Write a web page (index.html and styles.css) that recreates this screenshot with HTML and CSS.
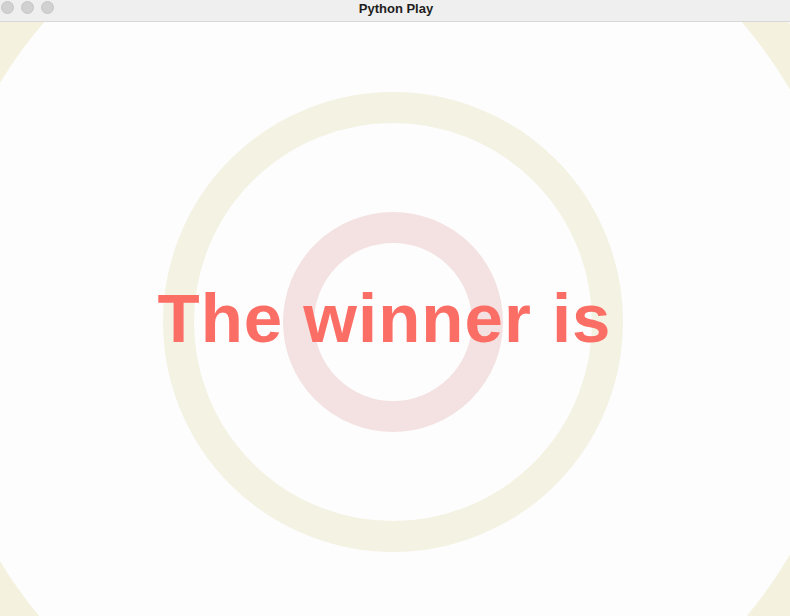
FILE: index.html
```html
<!DOCTYPE html>
<html>
<head>
<meta charset="utf-8">
<title>Python Play</title>
<link rel="stylesheet" href="styles.css">
</head>
<body>
<div class="window">
  <header class="titlebar">
    <div class="lights">
      <span class="light"></span>
      <span class="light"></span>
      <span class="light"></span>
    </div>
    <div class="title">Python Play</div>
  </header>
  <main class="stage">
    <svg class="rings" width="790" height="594" viewBox="0 0 790 594" aria-hidden="true">
      <circle cx="393" cy="300" r="478" fill="none" stroke="#f4f1df" stroke-width="36"/>
      <circle cx="393" cy="300" r="214.5" fill="none" stroke="#f4f2e3" stroke-width="31"/>
      <circle cx="393" cy="300" r="94.5" fill="none" stroke="#f4e2e2" stroke-width="31"/>
    </svg>
    <div class="message">The winner is</div>
  </main>
</div>
</body>
</html>
```

FILE: styles.css
```css
html, body {
  margin: 0;
  padding: 0;
  background: #fdfdfd;
}
.window {
  width: 790px;
  height: 616px;
  display: flex;
  flex-direction: column;
  overflow: hidden;
}
.titlebar {
  height: 21px;
  flex: 0 0 21px;
  background: #efefef;
  border-bottom: 1px solid #d8d8d8;
  display: grid;
  grid-template-columns: 1fr;
  align-items: center;
}
.lights {
  grid-area: 1 / 1;
  display: flex;
  gap: 7px;
  padding-left: 1px;
  align-self: start;
  padding-top: 1px;
}
.light {
  box-sizing: border-box;
  width: 13px;
  height: 13px;
  border-radius: 50%;
  background: #d1d1d1;
  border: 1px solid #c6c6c6;
}
.title {
  grid-area: 1 / 1;
  text-align: center;
  font-family: "Liberation Sans", Arial, sans-serif;
  font-weight: bold;
  font-size: 13px;
  color: #1e1e1e;
  padding-left: 2px;
  margin-top: -5px;
}
.stage {
  position: relative;
  flex: 1;
  display: grid;
  place-items: center;
  background: #fdfdfd;
}
.rings {
  position: absolute;
  left: 0;
  top: 0;
}
.message {
  position: relative;
  font-family: "Liberation Sans", Arial, sans-serif;
  font-weight: bold;
  font-size: 69px;
  letter-spacing: 1px;
  color: #fb6e66;
  margin-left: -21px;
  margin-top: -1px;
}
```
